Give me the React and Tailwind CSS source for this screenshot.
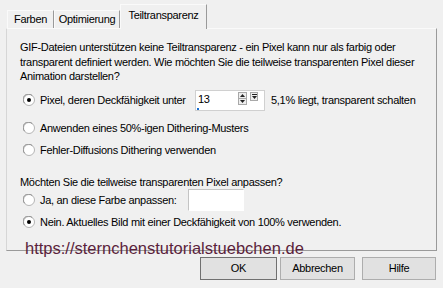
import React from "react";

const font = { fontFamily: '"Liberation Sans", Arial, sans-serif' };

function Radio({ checked }) {
  return (
    <svg width="12" height="12" viewBox="0 0 12 12" className="shrink-0">
      <circle cx="6" cy="6" r="5.5" fill="#ffffff" stroke="#b4b4b4" />
      <path d="M1.6 9.2 A5 5 0 0 1 9.2 1.6" fill="none" stroke="#8c8c8c" strokeWidth="1" />
      {checked && <circle cx="6" cy="6" r="2" fill="#000000" />}
    </svg>
  );
}

function Tab({ label, active, className }) {
  return (
    <div
      className={
        "flex items-center justify-center border-t border-l border-r border-t-[#fafafa] border-l-[#fafafa] border-r-[#9a9a9a] bg-[#f0f0f0] " +
        className +
        (active ? " relative z-10 -mb-px pb-[3px]" : "")
      }
    >
      {label}
    </div>
  );
}

function SpinBox() {
  return (
    <div className="relative flex h-[21px] w-[70px] items-start border border-[#d0d0d0] bg-white">
      <span className="pl-[2px] pt-[1px] leading-[14px]">13</span>
      <div className="ml-auto mr-[6px] mt-[1px] flex gap-[3px]">
        {/* up/down */}
        <div className="flex flex-col">
          <div className="flex h-[7px] w-[9px] items-center justify-center border border-[#a8a8a8] bg-[#eeeeee]">
            <svg width="5" height="3" viewBox="0 0 5 3"><path d="M0 3 L2.5 0 L5 3 Z" fill="#222" /></svg>
          </div>
          <div className="-mt-px flex h-[7px] w-[9px] items-center justify-center border border-[#a8a8a8] bg-[#eeeeee]">
            <svg width="5" height="3" viewBox="0 0 5 3"><path d="M0 0 L2.5 3 L5 0 Z" fill="#222" /></svg>
          </div>
        </div>
        {/* dropdown */}
        <div className="flex h-[9px] w-[8px] flex-col items-center justify-center gap-[1px] border border-[#a8a8a8] bg-[#eeeeee]">
          <div className="h-px w-[5px] bg-[#222]" />
          <svg width="5" height="3" viewBox="0 0 5 3"><path d="M0 0 L2.5 3 L5 0 Z" fill="#222" /></svg>
        </div>
      </div>
      <div className="absolute bottom-0 left-[1px] h-[2px] w-[2px] bg-[#1a6fd0]" />
    </div>
  );
}

function Button({ label, def, className }) {
  return (
    <div
      className={
        "flex h-[23px] items-center justify-center border bg-[#e1e1e1] " +
        (def ? "border-[#707070] " : "border-[#adadad] ") +
        className
      }
    >
      {label}
    </div>
  );
}

export default function App() {
  return (
    <div
      className="relative h-[288px] w-[443px] overflow-hidden bg-[#f0f0f0] pt-[4px] text-[11px] leading-[14.5px] tracking-[-0.3px] text-black"
      style={font}
    >
      {/* tabs */}
      <div className="flex h-[24px] items-end pl-[7px]">
        <Tab label="Farben" className="h-[18px] w-[47px]" />
        <Tab label="Optimierung" className="h-[18px] w-[66px]" />
        <Tab label="Teiltransparenz" active className="h-[25px] w-[87px]" />
      </div>

      {/* panel */}
      <div className="ml-[6px] h-[223px] w-[431px] border border-t-[#fafafa] border-l-[#d6d6d6] border-r-[#9a9a9a] border-b-[#9a9a9a] pl-[13px]">
        <p className="mt-[11px] whitespace-nowrap">
          GIF-Dateien unterstützen keine Teiltransparenz - ein Pixel kann nur als farbig oder
          <br />
          transparent definiert werden. Wie möchten Sie die teilweise transparenten Pixel dieser
          <br />
          Animation darstellen?
        </p>

        <div className="mt-[6px] flex h-[21px] items-center whitespace-nowrap">
          <span className="ml-[3px] mr-[5px] flex"><Radio checked /></span>
          <span className="w-[155px]">Pixel, deren Deckfähigkeit unter</span>
          <SpinBox />
          <span className="ml-[6px]">5,1% liegt, transparent schalten</span>
        </div>

        <div className="mt-[10px] flex items-center whitespace-nowrap">
          <span className="ml-[3px] mr-[5px] flex"><Radio /></span>
          <span>Anwenden eines 50%-igen Dithering-Musters</span>
        </div>

        <div className="mt-[8px] flex items-center whitespace-nowrap">
          <span className="ml-[3px] mr-[5px] flex"><Radio /></span>
          <span>Fehler-Diffusions Dithering verwenden</span>
        </div>

        <p className="mt-[17px] whitespace-nowrap">Möchten Sie die teilweise transparenten Pixel anpassen?</p>

        <div className="flex h-[22px] items-center whitespace-nowrap">
          <span className="ml-[3px] mr-[5px] flex"><Radio /></span>
          <span className="w-[148px]">Ja, an diese Farbe anpassen:</span>
          <div className="h-[22px] w-[56px] border border-[#c4c4c4] border-r-white border-b-white bg-white" />
        </div>

        <div className="mt-[4px] flex items-center whitespace-nowrap">
          <span className="ml-[3px] mr-[5px] flex"><Radio checked /></span>
          <span>Nein. Aktuelles Bild mit einer Deckfähigkeit von 100% verwenden.</span>
        </div>
      </div>

      {/* buttons */}
      <div className="mt-[6px] flex pl-[200px]">
        <Button label="OK" def className="w-[77px]" />
        <Button label="Abbrechen" className="ml-[3px] w-[75px]" />
        <Button label="Hilfe" className="ml-[7px] w-[74px]" />
      </div>

      {/* watermark */}
      <div
        className="absolute left-[25px] top-[240px] z-20 whitespace-nowrap text-[16.5px] leading-[16.5px] tracking-normal text-[#5b1f3c]"
        style={font}
      >
        https://sternchenstutorialstuebchen.de
      </div>
    </div>
  );
}
